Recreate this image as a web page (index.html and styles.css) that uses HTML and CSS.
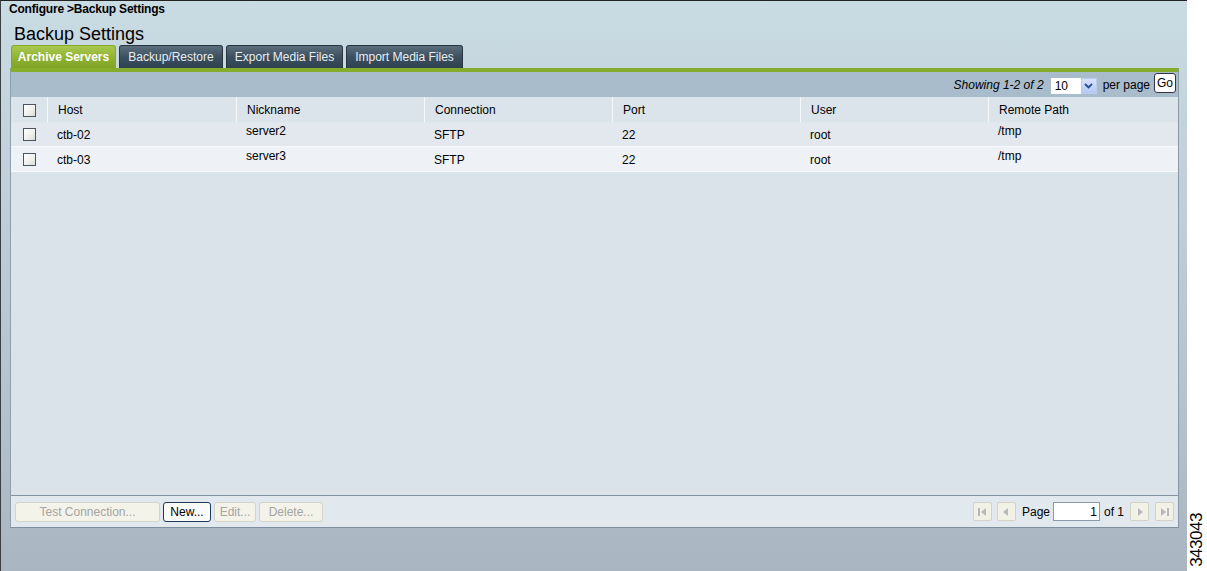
FILE: index.html
```html
<!DOCTYPE html>
<html lang="en">
<head>
    <meta charset="UTF-8">
    <title>Backup Settings</title>
    <link rel="stylesheet" href="styles.css">
</head>
<body>
    <div class="page">
        <div class="screen">
            <div class="crumb">Configure &gt;Backup Settings</div>
            <h1>Backup Settings</h1>
            <div class="tabs">
                <div class="tab active">Archive Servers</div>
                <div class="tab">Backup/Restore</div>
                <div class="tab">Export Media Files</div>
                <div class="tab">Import Media Files</div>
            </div>
            <div class="panel">
                <div class="toolbar">
                    <span class="showing">Showing 1-2 of 2</span>
                    <div class="select">
                        <span>10</span>
                        <span class="drop">
                            <svg width="9" height="6" viewBox="0 0 9 6"><path d="M1 1 L4.5 4.5 L8 1" fill="none" stroke="#2a4a9a" stroke-width="1.8"/></svg>
                        </span>
                    </div>
                    <span>per page</span>
                    <button class="go">Go</button>
                </div>
                <div class="grid head">
                    <div class="cell chk"><span class="box"></span></div>
                    <div class="cell">Host</div>
                    <div class="cell">Nickname</div>
                    <div class="cell">Connection</div>
                    <div class="cell">Port</div>
                    <div class="cell">User</div>
                    <div class="cell last">Remote Path</div>
                </div>
                <div class="grid row odd">
                    <div class="cell chk"><span class="box"></span></div>
                    <div class="cell">ctb-02</div>
                    <div class="cell up">server2</div>
                    <div class="cell">SFTP</div>
                    <div class="cell">22</div>
                    <div class="cell">root</div>
                    <div class="cell up">/tmp</div>
                </div>
                <div class="grid row even">
                    <div class="cell chk"><span class="box"></span></div>
                    <div class="cell">ctb-03</div>
                    <div class="cell up">server3</div>
                    <div class="cell">SFTP</div>
                    <div class="cell">22</div>
                    <div class="cell">root</div>
                    <div class="cell up">/tmp</div>
                </div>
                <div class="empty"></div>
                <div class="footer">
                    <div class="actions">
                        <button class="btn off test">Test Connection...</button>
                        <button class="btn new">New...</button>
                        <button class="btn off edit">Edit...</button>
                        <button class="btn off del">Delete...</button>
                    </div>
                    <div class="pager">
                        <span class="pbtn"><svg width="10" height="10" viewBox="0 0 10 10"><rect x="1" y="1" width="2" height="8" fill="#b4b8b8"/><path d="M9 1 L4 5 L9 9 Z" fill="#b4b8b8"/></svg></span>
                        <span class="pbtn prev"><svg width="10" height="10" viewBox="0 0 10 10"><path d="M7 1 L2 5 L7 9 Z" fill="#b4b8b8"/></svg></span>
                        <span class="plabel">Page</span>
                        <span class="pinput">1</span>
                        <span class="pof">of 1</span>
                        <span class="pbtn next"><svg width="10" height="10" viewBox="0 0 10 10"><path d="M3 1 L8 5 L3 9 Z" fill="#b4b8b8"/></svg></span>
                        <span class="pbtn last"><svg width="10" height="10" viewBox="0 0 10 10"><path d="M1 1 L6 5 L1 9 Z" fill="#b4b8b8"/><rect x="7" y="1" width="2" height="8" fill="#b4b8b8"/></svg></span>
                    </div>
                </div>
            </div>
        </div>
        <div class="side"><span>343043</span></div>
    </div>
</body>
</html>
```

FILE: styles.css
```css
body {
    margin: 0;
    font-family: 'Liberation Sans', Arial, sans-serif;
    font-size: 12px;
    color: #000;
}
.page {
    display: flex;
    width: 1207px;
    height: 571px;
}
.screen {
    width: 1186px;
    height: 570px;
    border-top: 1px solid #222;
    border-left: 1px solid #3a3f44;
    background: linear-gradient(180deg, #c9dbe3 0%, #c1d0da 30%, #b3c1cc 75%, #a9b5c0 100%);
    display: flex;
    flex-direction: column;
}
.crumb {
    font-weight: bold;
    font-size: 12px;
    padding: 1px 0 0 8px;
    height: 16px;
    letter-spacing: -0.2px;
}
h1 {
    margin: 0;
    padding: 6px 0 0 13px;
    height: 21px;
    font-size: 18px;
    font-weight: normal;
    line-height: 20px;
}
.tabs {
    display: flex;
    gap: 3px;
    padding-left: 10px;
    height: 23px;
}
.tab {
    box-sizing: border-box;
    text-align: center;
    line-height: 22px;
    color: #e8eef2;
    background: linear-gradient(180deg, #5a6e7c 0%, #3c5060 50%, #2f4150 100%);
    border: 1px solid #28343e;
    border-bottom: none;
    border-radius: 3px 3px 0 0;
    width: 117px;
}
.tab.active {
    width: 105px;
    color: #fff;
    font-weight: bold;
    background: linear-gradient(180deg, #a9c84f 0%, #8fb232 55%, #80a327 100%);
    border-color: #86a92c;
}
.tab:nth-child(2) { width: 104px; }
.panel {
    margin-left: 9px;
    width: 1167px;
    height: 455px;
    border-top: 4px solid #86ac2c;
    border-right: 1px solid #8797a4;
    border-left: 1px solid #8e9eab;
    border-bottom: 1px solid #7d8e9c;
    display: flex;
    flex-direction: column;
}
.toolbar {
    height: 25px;
    background: #a8bccb;
    display: flex;
    align-items: center;
    justify-content: flex-end;
    gap: 5px;
    padding-right: 2px;
}
.showing { font-style: italic; margin-right: 1px; }
.select {
    width: 48px;
    height: 18px;
    background: #fff;
    border: 1px solid #a9bccb;
    display: flex;
    align-items: center;
    justify-content: space-between;
    padding-left: 4px;
    box-sizing: border-box;
    margin-top: 2px;
}
.drop {
    width: 16px;
    height: 16px;
    background: linear-gradient(180deg, #d7e3fb, #b4c9f0);
    border: 1px solid #b9cbef;
    box-sizing: border-box;
    display: flex;
    align-items: center;
    justify-content: center;
}
.go {
    font-family: inherit;
    font-size: 12px;
    width: 22px;
    height: 20px;
    padding: 0;
    margin-bottom: 3px;
    margin-left: -1px;
    background: #fff;
    border: 1px solid #334;
    border-radius: 3px;
}
.grid {
    display: grid;
    grid-template-columns: 37px 189px 188px 188px 188px 188px 1fr;
    height: 25px;
    box-sizing: border-box;
}
.cell {
    padding-left: 9px;
    line-height: 24px;
    white-space: nowrap;
}
.head { background: #dbe4eb; }
.head .cell {
    padding-left: 10px;
    line-height: 26px;
    border-right: 1px solid #f4f7f9;
}
.head .cell.last { border-right: none; }
.row .cell { line-height: 24px; padding-top: 1px; }
.row .cell.up { padding-top: 0; line-height: 19px; }
.odd { background: #e2e8ee; border-bottom: 1px solid #f6f8fa; }
.even { background: #eef2f6; border-bottom: 1px solid #f6f8fa; }
.cell.chk {
    padding-left: 12px;
    display: flex;
    align-items: center;
}
.row .cell.chk { padding-top: 0; }
.box {
    width: 11px;
    height: 11px;
    border: 1px solid #4a5560;
    background: linear-gradient(135deg, #ffffff 0%, #eeeeea 60%, #d9dcd6 100%);
}
.empty {
    flex: 1;
    background: #dbe3ea;
}
.footer {
    height: 31px;
    background: #e1e8ee;
    border-top: 1px solid #8393a1;
    display: flex;
    align-items: center;
    justify-content: space-between;
    padding: 0 4px;
}
.actions { display: flex; gap: 3px; }
.btn {
    font-family: inherit;
    font-size: 12px;
    height: 20px;
    padding: 0;
    background: #fbfbf9;
    border: 1px solid #1e3b5e;
    border-radius: 3px;
    color: #000;
}
.btn.off {
    color: #a4a4a0;
    background: #f4f3ea;
    border-color: #d4d3c8;
}
.btn.test { width: 145px; }
.btn.new { width: 48px; }
.btn.edit { width: 42px; }
.btn.del { width: 64px; }
.pager {
    display: flex;
    align-items: center;
    padding-right: 0;
}
.pbtn {
    width: 17px;
    height: 17px;
    background: #f2f1e6;
    border: 1px solid #d2d2c8;
    border-radius: 2px;
    display: flex;
    align-items: center;
    justify-content: center;
}
.pbtn.prev { margin-left: 5px; }
.plabel { margin-left: 6px; }
.pinput {
    margin-left: 3px;
    width: 47px;
    height: 19px;
    background: #fff;
    border: 1px solid #8a9aa8;
    text-align: right;
    line-height: 19px;
    padding-right: 2px;
    box-sizing: border-box;
}
.pof { margin-left: 4px; }
.pbtn.next { margin-left: 6px; }
.pbtn.last { margin-left: 6px; }
.side {
    flex: 1;
    background: #fff;
    position: relative;
}
.side span {
    position: absolute;
    left: 50%;
    top: 540px;
    transform: translate(-50%, -50%) rotate(-90deg);
    font-size: 17px;
    letter-spacing: -0.5px;
}
```
